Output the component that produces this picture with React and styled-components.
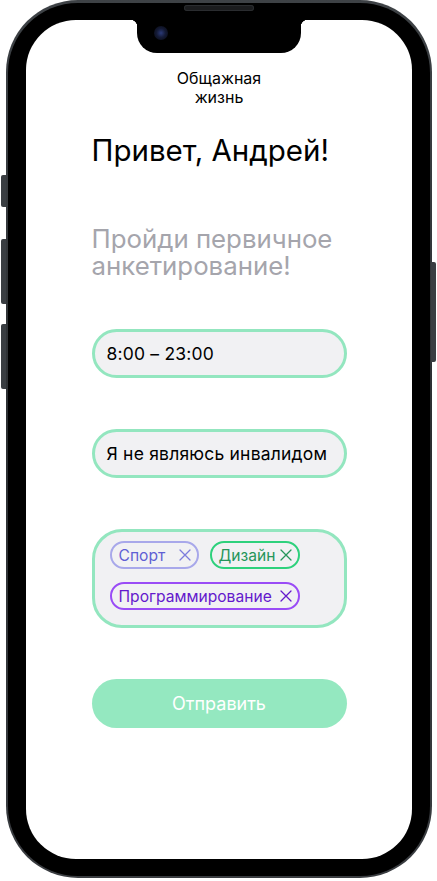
import React from 'react';
import styled, { createGlobalStyle } from 'styled-components';

const GlobalStyle = createGlobalStyle`
    body {
        margin: 0;
        background: #ffffff;
        font-family: Inter, "Noto Sans", sans-serif;
    }
`;

const Page = styled.div`
    width: 437px;
    height: 881px;
    padding-left: 6px;
    box-sizing: border-box;
`;

const Phone = styled.div`
    position: relative;
    width: 426px;
    height: 878px;
    box-sizing: border-box;
    padding: 3px 2px 2px 2px;
    border-radius: 72px;
    background: linear-gradient(180deg, #3e4246 0%, #2b2e31 50%, #3a3d41 100%);
`;

const Bezel = styled.div`
    height: 100%;
    box-sizing: border-box;
    padding: 17px 18px 17px 18px;
    border-radius: 70px;
    background: #000;
    display: flex;
`;

const Screen = styled.div`
    position: relative;
    flex: 1;
    background: #fff;
    border-radius: 50px;
    overflow: hidden;
    display: flex;
    flex-direction: column;
    align-items: center;
    padding-top: 49px;
`;

const Notch = styled.div`
    position: absolute;
    top: 0;
    left: 50%;
    transform: translateX(-50%);
    width: 164px;
    height: 33px;
    background: #000;
    border-radius: 0 0 20px 20px;

    &::before,
    &::after {
        content: '';
        position: absolute;
        top: 0;
        width: 7px;
        height: 7px;
    }
    &::before {
        left: -7px;
        background: radial-gradient(circle at 0 100%, transparent 7px, #000 7.5px);
    }
    &::after {
        right: -7px;
        background: radial-gradient(circle at 100% 100%, transparent 7px, #000 7.5px);
    }
`;

const Camera = styled.div`
    position: absolute;
    left: 17px;
    top: 6px;
    width: 14px;
    height: 14px;
    border-radius: 50%;
    background: radial-gradient(circle at 50% 50%, #2b3a78 0%, #141a35 45%, #07080d 100%);
`;

const Speaker = styled.div`
    position: absolute;
    top: 5px;
    left: 50%;
    transform: translateX(-50%);
    width: 70px;
    height: 6px;
    border-radius: 3px;
    background: #1b1c1e;
    box-shadow: inset 0 0 0 1px #2a2c2f;
`;

const SideButton = styled.div`
    position: absolute;
    width: 5px;
    background: #3a3e42;
    border-radius: ${p => (p.right ? '0 2px 2px 0' : '2px 0 0 2px')};
    ${p => (p.right ? 'right: -4px;' : 'left: -5px;')}
    top: ${p => p.top}px;
    height: ${p => p.h}px;
`;

const AppTitle = styled.div`
    font-size: 16px;
    line-height: 19px;
    color: #000;
    text-align: center;
    width: 100px;
`;

const Content = styled.div`
    width: 255px;
    display: flex;
    flex-direction: column;
`;

const Greeting = styled.h1`
    margin: 26px 0 0 0;
    font-size: 29.5px;
    line-height: 34px;
    font-weight: 400;
    color: #000;
    white-space: nowrap;
`;

const Subtitle = styled.h2`
    margin: 58px 0 0 0;
    font-size: 25.8px;
    line-height: 27px;
    font-weight: 400;
    color: #a5a5ac;
`;

const Fields = styled.div`
    margin-top: 50px;
    display: flex;
    flex-direction: column;
    gap: 51px;
`;

const Field = styled.div`
    height: 49px;
    box-sizing: border-box;
    border: 3px solid #93e6bf;
    border-radius: 25px;
    background: #f1f1f3;
    display: flex;
    align-items: center;
    padding: 0 12px;
    font-size: 17.5px;
    letter-spacing: 0.2px;
    color: #000;
    white-space: nowrap;
`;

const TagBox = styled.div`
    box-sizing: border-box;
    border: 3px solid #93e6bf;
    border-radius: 30px;
    background: #f1f1f3;
    padding: 9px 15px 15px 15px;
    display: grid;
    grid-template-columns: 89px 90px;
    column-gap: 11px;
    row-gap: 13px;
`;

const Chip = styled.div`
    grid-column: ${p => (p.wide ? '1 / span 2' : 'auto')};
    height: 28px;
    box-sizing: border-box;
    border: 2.5px solid ${p => p.border};
    border-radius: 14px;
    color: ${p => p.color};
    display: flex;
    align-items: center;
    justify-content: space-between;
    padding: 0 6px 0 7px;
    font-size: 15.6px;
    white-space: nowrap;
`;

const Submit = styled.button`
    height: 49px;
    border: none;
    border-radius: 25px;
    background: #94e8c0;
    color: #fff;
    font-family: Inter, "Noto Sans", sans-serif;
    font-size: 18px;
    cursor: pointer;
`;

const Close = ({ color }) => (
    <svg width="12" height="12" viewBox="0 0 12 12" fill="none">
        <path d="M1 1L11 11M11 1L1 11" stroke={color} strokeWidth="1.3" strokeLinecap="round" />
    </svg>
);

const tags = [
    { name: 'Спорт', border: '#a8a8ea', color: '#5f5fd4', x: '#7c7cdc' },
    { name: 'Дизайн', border: '#2ed17c', color: '#26955a', x: '#26955a' },
    { name: 'Программирование', border: '#9a4cf6', color: '#6419cc', x: '#6419cc', wide: true },
];

const App = () => {
    return (
        <Page>
            <GlobalStyle />
            <Phone>
                <SideButton top={175} h={32} />
                <SideButton top={239} h={65} />
                <SideButton top={324} h={65} />
                <SideButton right top={262} h={100} />
                <Bezel>
                    <Screen>
                        <Notch>
                            <Camera />
                        </Notch>
                        <AppTitle>Общажная жизнь</AppTitle>
                        <Content>
                            <Greeting>Привет, Андрей!</Greeting>
                            <Subtitle>Пройди первичное анкетирование!</Subtitle>
                            <Fields>
                                <Field>8:00 – 23:00</Field>
                                <Field>Я не являюсь инвалидом</Field>
                                <TagBox>
                                    {tags.map((tag, key) => (
                                        <Chip key={key} border={tag.border} color={tag.color} wide={tag.wide}>
                                            <span>{tag.name}</span>
                                            <Close color={tag.x} />
                                        </Chip>
                                    ))}
                                </TagBox>
                                <Submit>Отправить</Submit>
                            </Fields>
                        </Content>
                    </Screen>
                </Bezel>
                <Speaker />
            </Phone>
        </Page>
    );
};

export default App;
